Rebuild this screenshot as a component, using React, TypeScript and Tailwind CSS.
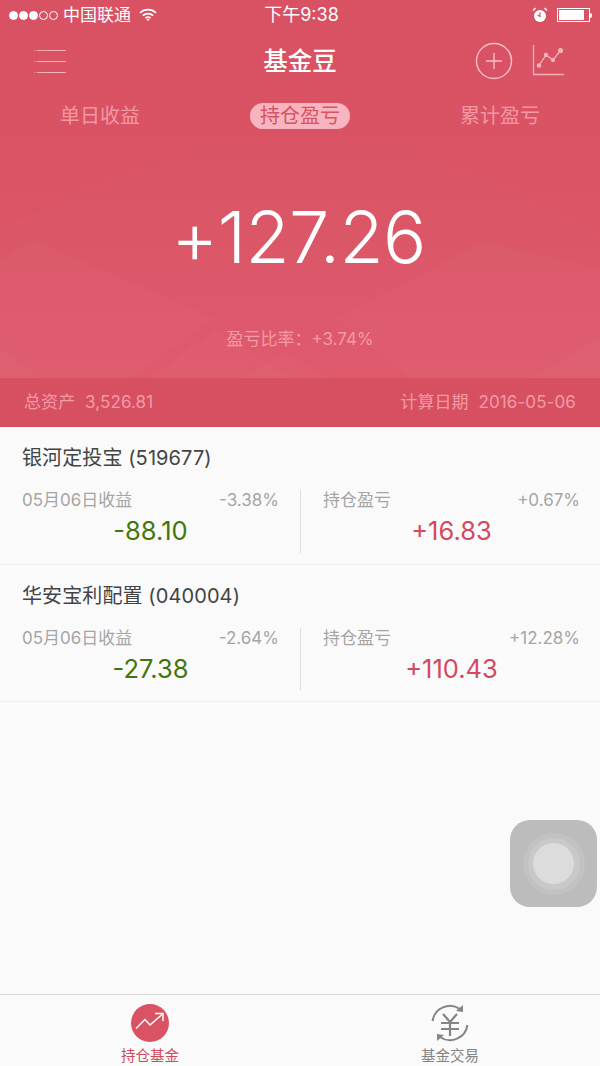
import React from "react";

const cjk = { fontFamily: '"Inter","Noto Sans CJK SC",sans-serif' };

function HeroPattern() {
  return (
    <svg className="absolute inset-0 w-full h-full" viewBox="0 0 600 378" preserveAspectRatio="none" aria-hidden="true">
      <defs>
        <linearGradient id="heroBg" x1="0" y1="0" x2="0" y2="1">
          <stop offset="0" stopColor="#d85264" />
          <stop offset="0.4" stopColor="#d95365" />
          <stop offset="1" stopColor="#df596b" />
        </linearGradient>
      </defs>
      <rect width="600" height="378" fill="url(#heroBg)" />
      <polygon points="0,228 130,170 210,145 400,145 520,190 600,232 600,378 0,378" fill="#ffffff" opacity="0.012" />
      <polygon points="0,262 33,240 215,318 130,378 0,378" fill="#ffffff" opacity="0.018" />
      <polygon points="600,268 483,242 335,318 410,378 600,378" fill="#ffffff" opacity="0.018" />
      <polygon points="0,348 40,378 0,378" fill="#ffffff" opacity="0.02" />
      <polygon points="245,378 285,352 330,378" fill="#ffffff" opacity="0.02" />
      <polygon points="530,378 600,338 600,378" fill="#ffffff" opacity="0.02" />
      <polygon points="150,378 215,330 290,378" fill="#ffffff" opacity="0.02" />
    </svg>
  );
}

function Fund({ name, r1, v1, r2, v2 }: { name: string; r1: string; v1: string; r2: string; v2: string }) {
  return (
    <div className="h-[137.5px] border-b border-[#efefef] pt-[19px]">
      <div className="pl-[22px] text-[20px] leading-[24px] text-[#444] tracking-[0.1px]">{name}</div>
      <div className="flex mt-[20px]">
        <div className="w-[301px] h-[63px] pl-[22px] pr-[21px] border-r border-[#dedede]">
          <div className="flex justify-between text-[17px] leading-[20px] text-[#a5a5a5]">
            <span>05月06日收益</span>
            <span>{r1}</span>
          </div>
          <div className="mt-[6px] text-center text-[25.5px] leading-[30px] text-[#41760f]">{v1}</div>
        </div>
        <div className="flex-1 h-[63px] pl-[22px] pr-[20px]">
          <div className="flex justify-between text-[17px] leading-[20px] text-[#a5a5a5]">
            <span>持仓盈亏</span>
            <span>{r2}</span>
          </div>
          <div className="mt-[6px] text-center text-[25.5px] leading-[30px] text-[#d4495e]">{v2}</div>
        </div>
      </div>
    </div>
  );
}

export default function App() {
  return (
    <div className="w-[600px] h-[1066px] flex flex-col bg-[#fafafa] overflow-hidden" style={cjk}>
      <div className="relative h-[378px] shrink-0">
        <HeroPattern />
        <div className="relative flex flex-col h-full">
          {/* status bar */}
          <div className="relative h-[30px] flex items-center pl-[9px] pr-[8px] text-white text-[17px]">
            <div className="flex items-center gap-[1px]">
              {[1, 1, 1, 0, 0].map((f, i) => (
                <span key={i} className={"w-[9px] h-[9px] rounded-full border border-white " + (f ? "bg-white" : "")} />
              ))}
            </div>
            <span className="ml-[5px] leading-[30px]">中国联通</span>
            <svg className="ml-[8px]" width="18" height="14" viewBox="0 0 18 14" fill="none" stroke="#fff" strokeWidth="1.7">
              <path d="M1 4.8C5.5 .6 12.5 .6 17 4.8" />
              <path d="M3.8 7.6C6.8 4.9 11.2 4.9 14.2 7.6" />
              <path d="M6.4 10.2C8 8.9 10 8.9 11.6 10.2" />
              <path d="M7.3 11L9 13l1.7-2z" fill="#fff" stroke="none" />
            </svg>
            <span className="absolute left-[3px] right-0 text-center text-[18px] leading-[30px]">下午9:38</span>
            <div className="ml-auto flex items-center gap-[9px]">
              <svg width="16" height="16" viewBox="0 0 16 16">
                <circle cx="8" cy="9" r="6" fill="#fff" />
                <path d="M8 5.5V9.5L5.5 8" stroke="#d95365" strokeWidth="1.2" fill="none" />
                <path d="M1 3.5L3.5 1M15 3.5L12.5 1" stroke="#fff" strokeWidth="1.3" />
              </svg>
              <div className="flex items-center">
                <div className="w-[33px] h-[14px] border border-white p-[1px]">
                  <div className="w-[25px] h-full bg-white" />
                </div>
                <div className="w-[2px] h-[5px] bg-white rounded-r-sm" />
              </div>
            </div>
          </div>
          {/* nav */}
          <div className="relative h-[60px] flex items-center justify-center">
            <svg className="absolute left-[34px] top-[19px]" width="33" height="25" viewBox="0 0 33 25" stroke="#f6b0ba" strokeWidth="1.2" fill="none">
              <path d="M3 1.5H32M3 12.5H32M3 23.5H32" />
              <path d="M0.5 1.5H1.5M0.5 12.5H1.5M0.5 23.5H1.5" />
            </svg>
            <span className="text-white text-[24.5px] font-medium leading-[30px] translate-y-[1px]">基金豆</span>
            <svg className="absolute left-[475px] top-[12px]" width="38" height="38" viewBox="0 0 38 38" stroke="#f9c0c8" strokeWidth="1.4" fill="none">
              <circle cx="19" cy="19" r="17.5" />
              <path d="M11 19H27M19 11V27" />
            </svg>
            <svg className="absolute left-[532px] top-[14px]" width="34" height="34" viewBox="0 0 34 34" stroke="#f6b0ba" strokeWidth="1.3" fill="none">
              <path d="M1.5 1V30.5H32" />
              <path d="M7 21.5L14 11L21 16L28.5 6.5" />
              <circle cx="7" cy="21.5" r="1.7" fill="#f6b0ba" />
              <circle cx="14" cy="11" r="1.5" fill="#f6b0ba" />
              <circle cx="21" cy="16" r="1.5" fill="#f6b0ba" />
              <circle cx="28.5" cy="6.5" r="1.9" fill="#f6b0ba" />
            </svg>
          </div>
          {/* tabs */}
          <div className="grid grid-cols-3 text-[20px] leading-[26px] text-center text-[#f497a4] h-[26px] mt-[13px]">
            <div>单日收益</div>
            <div className="flex justify-center">
              <span className="bg-[#f8b5c0] text-[#d95365] rounded-[13px] px-[10px]">持仓盈亏</span>
            </div>
            <div>累计盈亏</div>
          </div>
          {/* amount */}
          <div className="mt-[63px] pr-[3px] text-center text-white text-[72px] leading-[90px] font-[350] tracking-[-0.6px]">+127.26</div>
          <div className="mt-[46px] text-center text-[17px] leading-[22px] text-[#f59aa6]">盈亏比率：+3.74%</div>
        </div>
      </div>
      {/* summary */}
      <div className="h-[49px] shrink-0 flex items-center justify-between px-[24px] bg-[#d65062] text-[#f49aa7] text-[17px] tracking-[0.1px]">
        <span>总资产&nbsp;&nbsp;3,526.81</span>
        <span>计算日期&nbsp;&nbsp;2016-05-06</span>
      </div>
      {/* list */}
      <div className="flex-1 relative">
        <Fund name="银河定投宝 (519677)" r1="-3.38%" v1="-88.10" r2="+0.67%" v2="+16.83" />
        <Fund name="华安宝利配置 (040004)" r1="-2.64%" v1="-27.38" r2="+12.28%" v2="+110.43" />
        {/* assistive touch */}
        <div className="absolute left-[510px] top-[393px] w-[87px] h-[87px] rounded-[20px] bg-[#bcbcbc] flex items-center justify-center">
          <div className="w-[62px] h-[62px] rounded-full bg-[#c2c2c2] flex items-center justify-center">
            <div className="w-[52px] h-[52px] rounded-full bg-[#c9c9c9] flex items-center justify-center">
              <div className="w-[41px] h-[41px] rounded-full bg-[#dcdcdc]" />
            </div>
          </div>
        </div>
      </div>
      {/* tab bar */}
      <div className="h-[72px] shrink-0 border-t border-[#d8d8d8] bg-[#fafafa] flex">
        <div className="w-[300px] flex flex-col items-center pt-[9px]">
          <svg width="38" height="38" viewBox="0 0 38 38" fill="none">
            <circle cx="19" cy="19" r="19" fill="#d95365" />
            <path d="M5 24.5L14 15.5L19 21L31 10.5" stroke="#fff" strokeWidth="1.5" />
            <path d="M24 9.5H32V17" stroke="#fff" strokeWidth="1.5" />
          </svg>
          <span className="mt-[5px] text-[14.5px] leading-[18px] text-[#d4495e]">持仓基金</span>
        </div>
        <div className="flex-1 flex flex-col items-center pt-[9px]">
          <svg width="38" height="38" viewBox="0 0 38 38" fill="none" stroke="#858585" strokeWidth="2">
            <path d="M1.6 17A17.5 17.5 0 0 1 29 5" />
            <path d="M36.4 21A17.5 17.5 0 0 1 9 33" />
            <path d="M32 1L32 8L25 7z" fill="#858585" stroke="none" />
            <path d="M6 37L6 30L13 31z" fill="#858585" stroke="none" />
            <path d="M12 10L19 18L26 10M10 19H28M10 25H28M19 19V32" strokeWidth="2.2" />
          </svg>
          <span className="mt-[5px] text-[14.5px] leading-[18px] text-[#858585]">基金交易</span>
        </div>
      </div>
    </div>
  );
}
